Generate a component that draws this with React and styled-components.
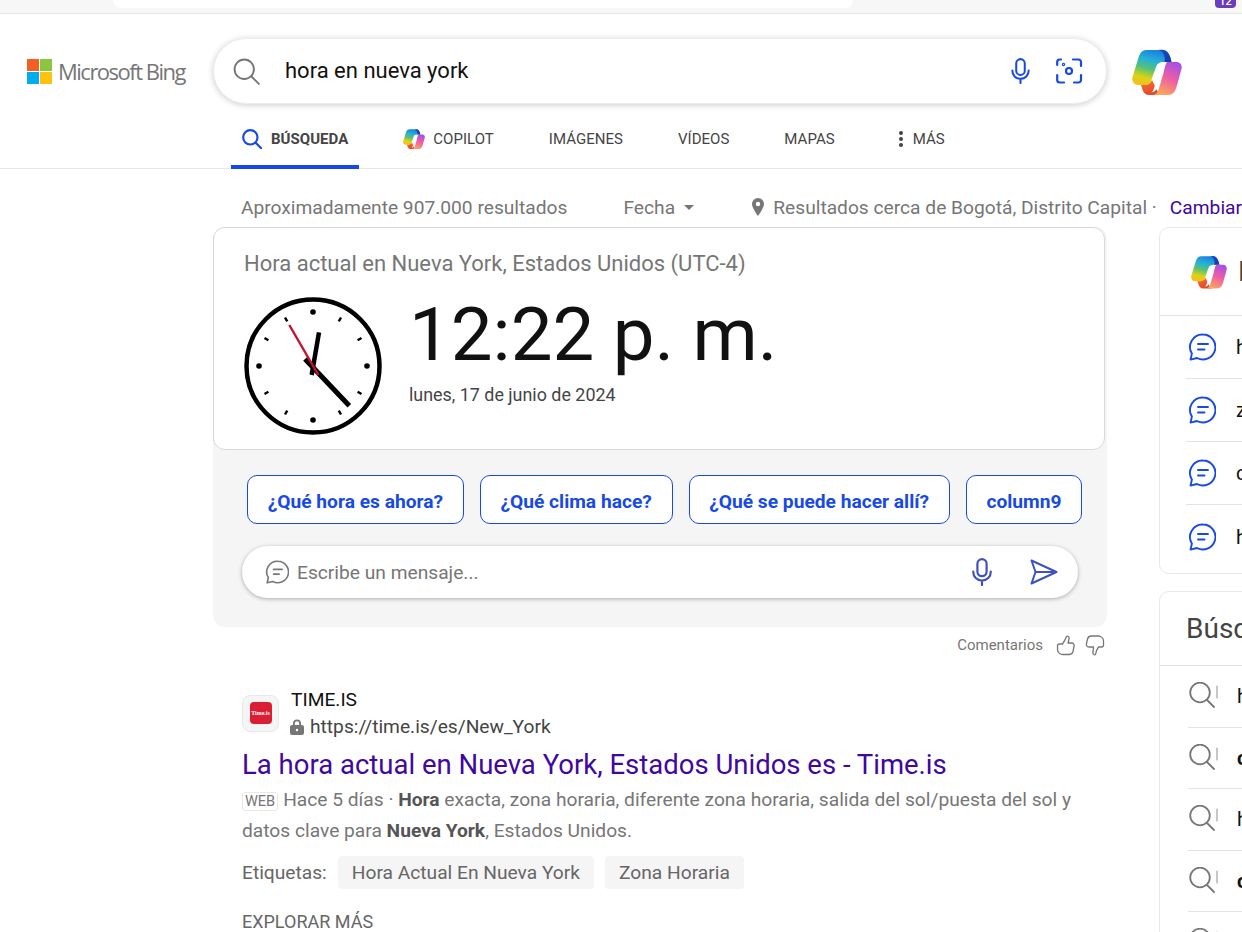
import styled, { createGlobalStyle } from 'styled-components';

const GlobalStyle = createGlobalStyle`
  html, body {
    margin: 0;
    padding: 0;
    height: 932px;
    overflow: hidden;
    background: #fff;
    font-family: Roboto, "Liberation Sans", sans-serif;
  }
  * { box-sizing: border-box; }
`;

const BLUE = '#174ae4';

function CopilotIcon({ id, size }) {
  return (
    <svg width={size} height={size} viewBox="0 0 50 46" fill="none">
      <defs>
        <linearGradient id={`${id}a`} x1="0.6" y1="0" x2="0.3" y2="1">
          <stop offset="0" stopColor="#1a7fe0" />
          <stop offset="0.3" stopColor="#25b0d8" />
          <stop offset="0.55" stopColor="#58c274" />
          <stop offset="0.8" stopColor="#dcd312" />
          <stop offset="1" stopColor="#f2c020" />
        </linearGradient>
        <linearGradient id={`${id}b`} x1="0.75" y1="0" x2="0.35" y2="1">
          <stop offset="0" stopColor="#a550e6" />
          <stop offset="0.5" stopColor="#ee5fa2" />
          <stop offset="1" stopColor="#fca85c" />
        </linearGradient>
        <linearGradient id={`${id}c`} x1="0.2" y1="0" x2="0.7" y2="1">
          <stop offset="0" stopColor="#f6702a" />
          <stop offset="1" stopColor="#e2402e" />
        </linearGradient>
        <linearGradient id={`${id}d`} x1="0.2" y1="0" x2="0.7" y2="1">
          <stop offset="0" stopColor="#0f4fc8" />
          <stop offset="1" stopColor="#1a38a8" />
        </linearGradient>
      </defs>
      <path d="M14 1H30C35 1 38 5 39.5 13H32C27 13 25 15 24 18L19 32C18 35 16 36 13 36H6C2 36-.5 32 .5 28L7 7C8.5 3 11 1 14 1Z" fill={`url(#${id}a)`} />
      <path d="M27 .8h3c5 0 8 4 9.5 12.2H32.5c1-5-1-10-5.5-12.2z" fill={`url(#${id}d)`} />
      <path d="M9 36h4c3 0 6-2 7-5l3.5 7c1.5 4 3.5 7 7 8H17c-4 0-6-3-7-7z" fill={`url(#${id}c)`} />
      <path d="M35 13h9.5c3.5 0 6 3 5 7L44.5 38c-1.3 5-4 8-8.5 8H20c3 0 5.5-2 6.5-5l5-17c1-5 2-9 3.5-11z" fill={`url(#${id}b)`} />
      <path d="M30 14.5h3.5c-1.5 2-2.5 5-3.5 9L25.5 38c-1 3-3 5-6 5.5 1.5-1.500 2.500-3.500 3-6l4-14c1-4 2-7 3.500-9z" fill="#fff" />
    </svg>
  );
}

function SearchIcon({ size, color, stroke }) {
  return (
    <svg width={size} height={size} viewBox="0 0 24 24" fill="none" stroke={color} strokeWidth={stroke} strokeLinecap="round">
      <circle cx="10" cy="10" r="8.6" />
      <path d="M16.4 16.4 23 23" />
    </svg>
  );
}

function MicIcon({ color, width, height }) {
  return (
    <svg width={width} height={height} viewBox="0 0 20 28" fill="none" stroke={color} strokeWidth="2.2" strokeLinecap="round">
      <rect x="5.4" y="1.2" width="9.2" height="17" rx="4.6" />
      <path d="M1.2 13.5c0 5.4 3.8 9 8.8 9s8.8-3.6 8.8-9M10 22.5V27" />
    </svg>
  );
}

function LensIcon() {
  return (
    <svg width="28" height="28" viewBox="0 0 28 28" fill="none" stroke={BLUE} strokeWidth="2.2" strokeLinecap="round">
      <path d="M6 2.5H4.5a2.5 2.5 0 0 0-2.3 2.5v3M2.2 18v5a2.5 2.5 0 0 0 2.5 2.5H9M19 25.5h4.5a2.5 2.5 0 0 0 2.5-2.5v-5M26 9V5a2.5 2.5 0 0 0-2.5-2.5H18" />
      <circle cx="14" cy="14" r="3" />
      <circle cx="8.5" cy="7.5" r="0.6" />
    </svg>
  );
}

function ChatIcon({ color, size }) {
  return (
    <svg width={size} height={size} viewBox="0 0 28 28" fill="none" stroke={color} strokeWidth="1.9" strokeLinecap="round" strokeLinejoin="round">
      <path d="M15 1.5a12.5 12.5 0 1 1-6 23.5l-6.5 1.6 1.4-6A12.5 12.5 0 0 1 15 1.5z" />
      <path d="M10 11h10M10 16.5h6.5" />
    </svg>
  );
}

function RelatedIcon() {
  return (
    <svg width="30" height="28" viewBox="0 0 30 28" fill="none" stroke="#767676" strokeWidth="1.8" strokeLinecap="round">
      <circle cx="11" cy="10.5" r="9.8" />
      <path d="M18 18l7 7" />
      <path d="M28 4v12" strokeWidth="1.1" stroke="#9a9a9a" />
    </svg>
  );
}

const TICKS = [0, 1, 2, 3, 4, 5, 6, 7, 8, 9, 10, 11];

function Clock() {
  return (
    <svg width="138" height="138" viewBox="0 0 138 138" fill="none">
      <circle cx="69" cy="69" r="66.5" stroke="#000" strokeWidth="4.5" />
      {TICKS.map((t) =>
        t % 3 === 0 ? (
          <circle key={t} cx="69" cy="15" r="2.8" fill="#000" transform={`rotate(${t * 30} 69 69)`} />
        ) : (
          <rect key={t} x="67.8" y="13" width="2.4" height="4.5" fill="#000" transform={`rotate(${t * 30} 69 69)`} />
        )
      )}
      <path d="M67.7 78 75 35.3" stroke="#000" strokeWidth="4.5" />
      <path d="M61 62l44.3 46.7" stroke="#000" strokeWidth="5" />
      <path d="M45.3 28l29 50" stroke="#c8102e" strokeWidth="2.4" />
    </svg>
  );
}

const copilotRows = ['hora actual en Nueva York', 'zona horaria de Nueva York', 'clima en Nueva York', 'hora de Bogotá'];
const relatedRows = [
  { text: 'hora actual en Nueva York' },
  { text: 'cuantas horas de diferencia', bold: true },
  { text: 'hora en new york ahora' },
  { text: 'cual es la hora en Nueva York', bold: true },
];
const chips = ['¿Qué hora es ahora?', '¿Qué clima hace?', '¿Qué se puede hacer allí?', 'column9'];

export default function App() {
  return (
    <Page>
      <GlobalStyle />
      <TopStrip>
        <AddressPill />
        <CountBadge>12</CountBadge>
      </TopStrip>

      <Header>
        <Logo>
          <LogoMark>
            <LogoSquare $color="#f25f22" />
            <LogoSquare $color="#8cc63f" />
            <LogoSquare $color="#00adef" />
            <LogoSquare $color="#ffc20e" />
          </LogoMark>
          <LogoText>Microsoft Bing</LogoText>
        </Logo>
        <SearchBox>
          <SearchIcon size={27} color="#767676" stroke={1.7} />
          <Query>hora en nueva york</Query>
          <MicIcon color={BLUE} width={19} height={26} />
          <LensWrap><LensIcon /></LensWrap>
        </SearchBox>
        <HeaderCopilot><CopilotIcon id="head" size={50} /></HeaderCopilot>
      </Header>

      <Tabs>
        <Tab $active>
          <SearchIcon size={20} color={BLUE} stroke={2.6} />
          <span>BÚSQUEDA</span>
        </Tab>
        <Tab>
          <CopilotIcon id="tab" size={22} />
          <span>COPILOT</span>
        </Tab>
        <Tab>IMÁGENES</Tab>
        <Tab>VÍDEOS</Tab>
        <Tab>MAPAS</Tab>
        <MoreTab>
          <MoreDots><i /><i /><i /></MoreDots>
          MÁS
        </MoreTab>
      </Tabs>

      <Stats>
        <ResultCount>Aproximadamente 907.000 resultados</ResultCount>
        <DateFilter>Fecha<Caret /></DateFilter>
        <svg width="14" height="18" viewBox="0 0 14 18" fill="#767676">
          <path fillRule="evenodd" d="M7 0a6 6 0 0 1 6 6c0 4-6 12-6 12S1 10 1 6a6 6 0 0 1 6-6zm0 3.8a2.2 2.2 0 1 0 0 4.4 2.2 2.2 0 0 0 0-4.4z" />
        </svg>
        <Location>Resultados cerca de Bogotá, Distrito Capital ·</Location>
        <ChangeLink>Cambiar</ChangeLink>
      </Stats>

      <Columns>
        <MainColumn>
          <AnswerPanel>
            <ClockCard>
              <ClockTitle>Hora actual en Nueva York, Estados Unidos (UTC-4)</ClockTitle>
              <ClockBody>
                <Clock />
                <div>
                  <BigTime>12:22 p. m.</BigTime>
                  <ClockDate>lunes, 17 de junio de 2024</ClockDate>
                </div>
              </ClockBody>
            </ClockCard>
            <ChipRow>
              {chips.map((c) => <Chip key={c}>{c}</Chip>)}
            </ChipRow>
            <MessageBox>
              <ChatIcon color="#767676" size={24} />
              <Placeholder>Escribe un mensaje...</Placeholder>
              <MicIcon color="#3f51c0" width={20} height={28} />
              <SendWrap>
                <svg width="28" height="26" viewBox="0 0 28 26" fill="none" stroke="#3f51c0" strokeWidth="2" strokeLinejoin="round">
                  <path d="M1.5 1.5 26.5 13 1.5 24.5 5.5 13zM5.5 13h21" />
                </svg>
              </SendWrap>
            </MessageBox>
          </AnswerPanel>

          <Feedback>
            <span>Comentarios</span>
            <svg width="20" height="21" viewBox="0 0 20 21" fill="none" stroke="#767676" strokeWidth="1.3" strokeLinejoin="round">
              <path d="M1.5 11c0-1.5 1-2 2-2h3c1.5-2 3-5 4-7.5 1.5-1 3 .5 2.5 2.5l-1 4h3.5c2 0 3 1.5 2.5 3.5l-1 5c-.5 2-2 3-4 3H7c-3 0-5.5-2-5.5-5z" />
            </svg>
            <svg width="20" height="21" viewBox="0 0 20 21" fill="none" stroke="#767676" strokeWidth="1.3" strokeLinejoin="round">
              <path d="M18.5 10c0 1.5-1 2-2 2h-3c-1.5 2-2.5 4.5-3 7.5-1.5 1-3-.5-2.5-2.5l.5-5H4c-2 0-3-1.5-2.5-3.5l1-4.5c.5-2 2-3 4-3H13c3 0 5.5 2 5.5 5z" />
            </svg>
          </Feedback>

          <Result>
            <Source>
              <Favicon><FaviconInner>Time.is</FaviconInner></Favicon>
              <div>
                <SiteName>TIME.IS</SiteName>
                <SiteUrl>
                  <svg width="14" height="16" viewBox="0 0 14 16" fill="#767676">
                    <path fillRule="evenodd" d="M3 6V4.5a4 4 0 0 1 8 0V6h1a2 2 0 0 1 2 2v6a2 2 0 0 1-2 2H2a2 2 0 0 1-2-2V8a2 2 0 0 1 2-2zm1.8 0h4.4V4.5a2.2 2.2 0 0 0-4.4 0zM7 9.8a1.2 1.2 0 1 0 0 2.4 1.2 1.2 0 0 0 0-2.4z" />
                  </svg>
                  https://time.is/es/New_York
                </SiteUrl>
              </div>
            </Source>
            <ResultTitle>La hora actual en Nueva York, Estados Unidos es - Time.is</ResultTitle>
            <Snippet>
              <WebTag>WEB</WebTag>Hace 5 días · <b>Hora</b> exacta, zona horaria, diferente zona horaria, salida del sol/puesta del sol y datos clave para <b>Nueva York</b>, Estados Unidos.
            </Snippet>
            <TagRow>
              <span>Etiquetas:</span>
              <Tag>Hora Actual En Nueva York</Tag>
              <Tag>Zona Horaria</Tag>
            </TagRow>
            <Explore>EXPLORAR MÁS</Explore>
          </Result>
        </MainColumn>

        <SideColumn>
          <SideCard>
            <CopilotHead>
              <CopilotIcon id="side" size={36} />
              <CopilotHeadText>Búsquedas con Copilot</CopilotHeadText>
            </CopilotHead>
            <CopilotList>
              {copilotRows.map((r, i) => (
                <CopilotRow key={r} $last={i === copilotRows.length - 1}>
                  <ChatIcon color={BLUE} size={28} />
                  <RowText>{r}</RowText>
                </CopilotRow>
              ))}
            </CopilotList>
          </SideCard>
          <SideCard>
            <RelatedHead>Búsquedas relacionadas</RelatedHead>
            {relatedRows.map((r) => (
              <RelatedRow key={r.text}>
                <RelatedIcon />
                <RowText $bold={r.bold}>{r.text}</RowText>
              </RelatedRow>
            ))}
            <RelatedRow>
              <RelatedIcon />
              <RowText>hora</RowText>
            </RelatedRow>
          </SideCard>
        </SideColumn>
      </Columns>
    </Page>
  );
}

const Page = styled.div`
  width: 1242px;
  height: 932px;
  overflow: hidden;
  color: #111;
`;

const TopStrip = styled.div`
  height: 14px;
  display: flex;
  align-items: flex-start;
  background: #f7f7f7;
  border-bottom: 1px solid #e6e6e6;
`;

const AddressPill = styled.div`
  width: 740px;
  height: 8px;
  margin-left: 113px;
  background: #fff;
  border-radius: 0 0 16px 16px;
`;

const CountBadge = styled.div`
  width: 21px;
  height: 8px;
  margin-left: auto;
  margin-right: 6px;
  overflow: hidden;
  background: #6b3db8;
  border-radius: 0 0 4px 4px;
  color: #fff;
  font-size: 11px;
  font-weight: 500;
  line-height: 3px;
  text-align: center;
`;

const Header = styled.header`
  height: 105px;
  display: flex;
  align-items: flex-start;
  padding: 24px 0 0 27px;
`;

const Logo = styled.div`
  width: 186px;
  height: 66px;
  display: flex;
  align-items: center;
  gap: 6px;
`;

const LogoMark = styled.div`
  width: 25px;
  height: 25px;
  display: grid;
  grid-template-columns: 1fr 1fr;
  gap: 1px;
`;

const LogoSquare = styled.div`
  background: ${(p) => p.$color};
`;

const LogoText = styled.span`
  font-family: "Open Sans", sans-serif;
  font-size: 22px;
  font-weight: 500;
  letter-spacing: -1.5px;
  color: #767676;
`;

const SearchBox = styled.div`
  width: 894px;
  height: 66px;
  display: flex;
  align-items: center;
  padding: 0 23px 0 19px;
  background: #fff;
  border: 1px solid #ececec;
  border-radius: 33px;
  box-shadow: 0 1px 6px rgba(0, 0, 0, 0.2);
`;

const Query = styled.div`
  flex: 1;
  margin: -2px 0 0 25px;
  font-size: 22px;
  color: #111;
`;

const LensWrap = styled.div`
  display: flex;
  margin-left: 25px;
`;

const HeaderCopilot = styled.div`
  display: flex;
  margin: 9px 0 0 25px;
`;

const Tabs = styled.nav`
  height: 50px;
  display: flex;
  gap: 33px;
  padding-left: 231px;
  border-bottom: 1px solid #e6e6e6;
`;

const Tab = styled.div`
  height: 50px;
  display: flex;
  align-items: center;
  gap: ${(p) => (p.$active ? '9px' : '8px')};
  padding: 0 11px;
  padding-bottom: ${(p) => (p.$active ? '7px' : '11px')};
  font-size: 15px;
  letter-spacing: 0.03px;
  font-weight: ${(p) => (p.$active ? 700 : 400)};
  color: #444;
  border-bottom: ${(p) => (p.$active ? `4px solid ${BLUE}` : '0')};
`;

const MoreTab = styled(Tab)`
  gap: 10px;
  padding-left: 20px;
`;

const MoreDots = styled.div`
  display: flex;
  flex-direction: column;
  gap: 2px;
  i {
    width: 4px;
    height: 4px;
    border-radius: 50%;
    background: #444;
  }
`;

const Stats = styled.div`
  height: 58px;
  display: flex;
  align-items: center;
  padding: 18px 0 0 241px;
  font-size: 19.2px;
  color: #767676;
  white-space: nowrap;
`;

const ResultCount = styled.span`
  width: 383px;
`;

const DateFilter = styled.span`
  width: 128px;
  display: flex;
  align-items: center;
  gap: 9px;
`;

const Caret = styled.i`
  width: 0;
  height: 0;
  border-left: 5px solid transparent;
  border-right: 5px solid transparent;
  border-top: 5px solid #767676;
`;

const Location = styled.span`
  margin-left: 8px;
`;

const ChangeLink = styled.span`
  margin-left: 13px;
  color: #4007a2;
`;

const Columns = styled.div`
  display: flex;
  align-items: flex-start;
  padding-left: 213px;
`;

const MainColumn = styled.main`
  width: 894px;
  flex-shrink: 0;
`;

const AnswerPanel = styled.section`
  height: 400px;
  background: #f5f5f5;
  border-radius: 12px;
`;

const ClockCard = styled.div`
  width: 892px;
  height: 223px;
  padding: 23px 30px 0;
  background: #fff;
  border: 1px solid #d8d8d8;
  border-radius: 12px;
`;

const ClockTitle = styled.div`
  font-size: 22px;
  line-height: 26px;
  color: #767676;
`;

const ClockBody = styled.div`
  display: flex;
  margin-top: 20px;
  gap: 27px;
`;

const BigTime = styled.div`
  margin: -8px 0 0 0;
  font-size: 74.4px;
  line-height: 92px;
  white-space: nowrap;
  color: #111;
`;

const ClockDate = styled.div`
  margin-top: 2px;
  font-size: 17.9px;
  line-height: 24px;
  color: #444;
`;

const ChipRow = styled.div`
  display: flex;
  gap: 16px;
  padding: 25px 0 0 34px;
`;

const Chip = styled.button`
  height: 49px;
  padding: 3px 19.7px 0;
  background: #fff;
  border: 1px solid ${BLUE};
  border-radius: 10px;
  font-family: inherit;
  font-size: 19.2px;
  font-weight: 700;
  color: ${BLUE};
  white-space: nowrap;
`;

const MessageBox = styled.div`
  width: 836px;
  height: 52px;
  display: flex;
  align-items: center;
  margin: 22px 0 0 29px;
  padding: 0 20px 0 23px;
  background: #fff;
  border-radius: 26px;
  box-shadow: 0 1px 4px rgba(0, 0, 0, 0.3);
`;

const Placeholder = styled.div`
  flex: 1;
  margin-left: 8px;
  font-size: 19.2px;
  color: #767676;
`;

const SendWrap = styled.div`
  display: flex;
  margin-left: 38px;
`;

const Feedback = styled.div`
  height: 36px;
  display: flex;
  align-items: center;
  justify-content: flex-end;
  gap: 9px;
  padding-right: 2px;
  font-size: 15px;
  color: #767676;
  span { margin-right: 4px; }
`;

const Result = styled.article`
  padding: 23px 0 0 29px;
`;

const Source = styled.div`
  display: flex;
  align-items: center;
  gap: 12px;
`;

const Favicon = styled.div`
  width: 37px;
  height: 37px;
  display: flex;
  align-items: center;
  justify-content: center;
  background: #f5f5f5;
  border: 1px solid #e8e8e8;
  border-radius: 8px;
`;

const FaviconInner = styled.div`
  width: 22px;
  height: 22px;
  display: flex;
  align-items: center;
  justify-content: center;
  background: #dc1e35;
  border-radius: 4px;
  color: #fff;
  font-family: "Liberation Serif", serif;
  font-size: 6px;
  font-weight: 700;
`;

const SiteName = styled.div`
  font-size: 19.2px;
  line-height: 27px;
  color: #111;
`;

const SiteUrl = styled.div`
  display: flex;
  align-items: center;
  gap: 6px;
  margin-left: -1px;
  font-size: 19.2px;
  line-height: 27px;
  color: #444;
`;

const ResultTitle = styled.h2`
  margin: 7px 0 0;
  font-size: 27.5px;
  font-weight: 400;
  line-height: 36px;
  color: #4007a2;
  white-space: nowrap;
`;

const Snippet = styled.p`
  width: 850px;
  margin: 2px 0 0;
  font-size: 19.2px;
  line-height: 29px;
  color: #767676;
  b { color: #555; font-weight: 700; }
`;

const WebTag = styled.span`
  margin-right: 5px;
  padding: 0 2px;
  border: 1px solid #e8e8e8;
  border-radius: 3px;
  font-size: 14.5px;
`;

const TagRow = styled.div`
  display: flex;
  align-items: center;
  gap: 11px;
  margin-top: 11px;
  font-size: 19.2px;
  color: #666;
`;

const Tag = styled.span`
  height: 33px;
  padding: 0 14px;
  background: #f5f5f5;
  border-radius: 4px;
  line-height: 33px;
  color: #666;
`;

const Explore = styled.div`
  margin-top: 22px;
  font-size: 18px;
  line-height: 22px;
  color: #666;
`;

const SideColumn = styled.aside`
  width: 400px;
  flex-shrink: 0;
  margin-left: 52px;
  display: flex;
  flex-direction: column;
  gap: 17px;
`;

const SideCard = styled.section`
  background: #fff;
  border: 1px solid #e8e8e8;
  border-radius: 10px;
`;

const CopilotHead = styled.div`
  height: 88px;
  display: flex;
  align-items: center;
  gap: 11px;
  padding-left: 31px;
  border-bottom: 1px solid #e2e2e2;
`;

const CopilotHeadText = styled.div`
  font-size: 28px;
  color: #444;
`;

const CopilotList = styled.div`
  padding-bottom: 5px;
`;

const CopilotRow = styled.div`
  height: 63px;
  display: flex;
  align-items: center;
  gap: 20px;
  margin-left: 26px;
  padding-left: 2px;
  border-bottom: ${(p) => (p.$last ? '0' : '1px solid #e2e2e2')};
`;

const RowText = styled.div`
  font-size: 20px;
  font-weight: ${(p) => (p.$bold ? 700 : 400)};
  color: #111;
  white-space: nowrap;
`;

const RelatedHead = styled.div`
  height: 74px;
  padding: 19px 0 0 26px;
  font-size: 28px;
  line-height: 36px;
  color: #444;
  border-bottom: 1px solid #e2e2e2;
`;

const RelatedRow = styled.div`
  height: 61.5px;
  display: flex;
  align-items: center;
  gap: 18px;
  margin-left: 28px;
  padding-left: 1px;
  border-bottom: 1px solid #e2e2e2;
`;
